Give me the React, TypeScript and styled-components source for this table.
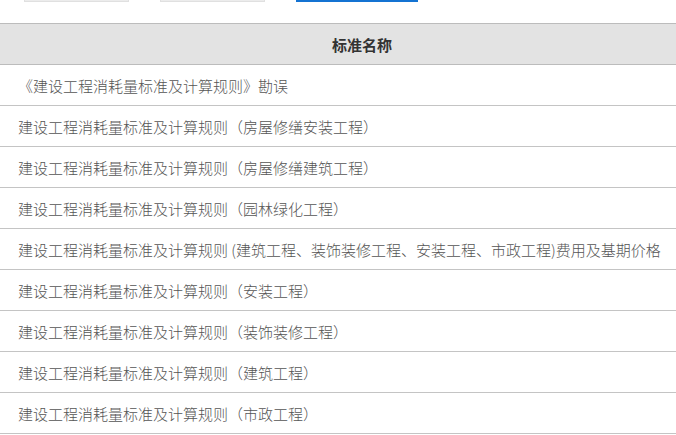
import React from "react";
import styled, { createGlobalStyle } from "styled-components";

const Global = createGlobalStyle`
  html, body { margin: 0; padding: 0; background: #fff; overflow: hidden; }
  body { font-family: "Noto Sans CJK SC", "Microsoft YaHei", sans-serif; }
`;

const Page = styled.div`
  width: 676px;
  height: 435px;
  overflow: hidden;
  background: #fff;
`;

const Tabs = styled.div`
  display: flex;
  gap: 31px;
  padding-left: 24px;
  height: 23px;
`;

const Tab = styled.div<{ $active?: boolean; $w: number }>`
  width: ${(p) => p.$w}px;
  height: 2px;
  box-sizing: border-box;
  background: ${(p) => (p.$active ? "#1473d2" : "#ececec")};
  border: 1px solid ${(p) => (p.$active ? "#1473d2" : "#e0e0e0")};
  border-top: none;
`;

const Table = styled.div`
  width: 724px;
`;

const Header = styled.div`
  height: 42px;
  box-sizing: border-box;
  border-top: 1px solid #bcbcbc;
  border-bottom: 1px solid #bcbcbc;
  background: #e3e3e3;
  display: flex;
  align-items: center;
  justify-content: center;
  font-size: 15px;
  font-weight: bold;
  color: #333;
`;

const Row = styled.div`
  height: 41px;
  box-sizing: border-box;
  border-bottom: 1px solid #c4c4c4;
  display: flex;
  align-items: center;
  padding-left: 18px;
  font-size: 15px;
  font-weight: 300;
  color: #555;
  white-space: nowrap;
`;

const rows = [
  "《建设工程消耗量标准及计算规则》勘误",
  "建设工程消耗量标准及计算规则（房屋修缮安装工程）",
  "建设工程消耗量标准及计算规则（房屋修缮建筑工程）",
  "建设工程消耗量标准及计算规则（园林绿化工程）",
  "建设工程消耗量标准及计算规则 (建筑工程、装饰装修工程、安装工程、市政工程)费用及基期价格",
  "建设工程消耗量标准及计算规则（安装工程）",
  "建设工程消耗量标准及计算规则（装饰装修工程）",
  "建设工程消耗量标准及计算规则（建筑工程）",
  "建设工程消耗量标准及计算规则（市政工程）",
];

export default function App() {
  return (
    <Page>
      <Global />
      <Tabs>
        <Tab $w={105} />
        <Tab $w={105} />
        <Tab $w={122} $active />
      </Tabs>
      <Table>
        <Header>标准名称</Header>
        {rows.map((r) => (
          <Row key={r}>{r}</Row>
        ))}
      </Table>
    </Page>
  );
}
